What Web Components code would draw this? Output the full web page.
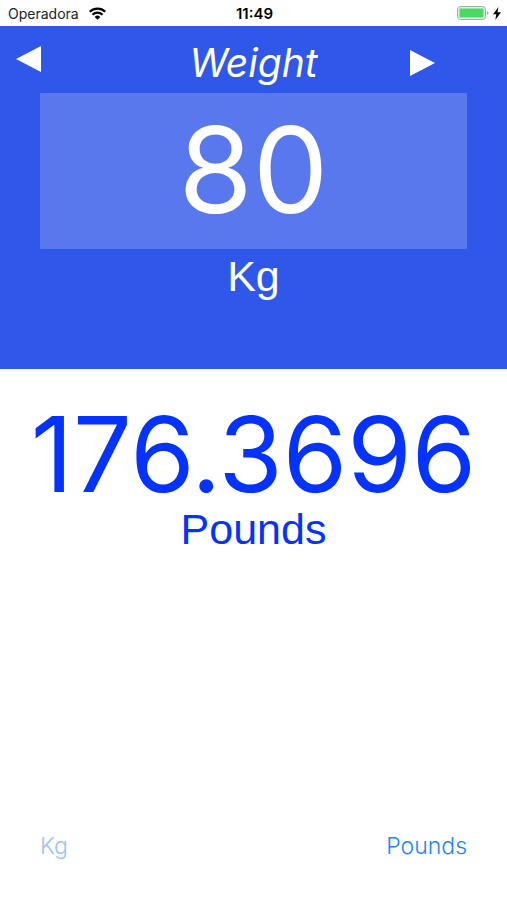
<!DOCTYPE html>
<html lang="en">
<head>
<meta charset="utf-8">
<meta name="viewport" content="width=device-width, initial-scale=1">
<title>Weight</title>
<style>
    html, body { height: 100%; }
    body {
        margin: 0;
        background: #fff;
        font-family: Inter, Roboto, sans-serif;
    }
</style>
</head>
<body>
<unit-converter></unit-converter>

<script>
/* Status bar: carrier, clock, battery */
(function(){

    const template = document.createElement('template');

    template.innerHTML = `
    <style>
    :host {
        display: grid;
        grid-template-columns: 1fr auto 1fr;
        align-items: center;
        height: 26px;
        padding: 0 6px 0 8px;
        box-sizing: border-box;
        background: #fff;
        color: #000;
        font-size: 15px;
    }
    .side {
        display: flex;
        align-items: center;
        gap: 6px;
    }
    .carrier {
        font-size: 14px;
        color: #222;
    }
    .left { gap: 10px; }
    .right {
        justify-content: flex-end;
        gap: 4px;
    }
    time { font-weight: 600; }
    svg { display: block; }
    </style>

    <div class="side left">
        <span class="carrier"><slot></slot></span>
        <svg width="17" height="13" viewBox="0 0 17 13" aria-hidden="true">
            <g fill="none" stroke="#000" stroke-width="2.200">
                <path d="M.8 4.800a11 11 0 0 1 15.400 0"/>
                <path d="M3.500 7.700a7.200 7.200 0 0 1 10 0"/>
            </g>
            <path d="M5.700 9.900a4.100 4.100 0 0 1 5.600 0L8.500 12.700z"/>
        </svg>
    </div>
    <time>11:49</time>
    <div class="side right">
        <svg width="32" height="14" viewBox="0 0 32 14" aria-hidden="true">
            <rect x=".5" y=".5" width="28" height="13" rx="3" fill="#e4ece4" stroke="#a6a6a6"/>
            <rect x="2.500" y="2.500" width="24" height="9" rx="1" fill="#4cd964"/>
            <path d="M30 5q1.500 .5 1.500 2t-1.500 2z" fill="#a6a6a6"/>
        </svg>
        <svg width="8" height="13" viewBox="0 0 8 13" aria-hidden="true">
            <path d="M5.500 0 0 7.300h3.300L2.300 13 8 5.300H4.500z"/>
        </svg>
    </div>`

    customElements.define('status-bar',
    class extends HTMLElement {
        constructor() {
            super()
            this.attachShadow({ mode: 'open' }).append(template.content.cloneNode(true));
        }
    });

}) ();

/* Arrow button, points left unless dir-to="right" */
(function(){

    const template = document.createElement('template');

    template.innerHTML = `
    <style>
    :host { display: block; }
    button {
        display: block;
        padding: 0;
        border: none;
        background: none;
        color: inherit;
        cursor: pointer;
    }
    svg { display: block; }
    :host([dir-to="right"]) svg { transform: scaleX(-1); }
    </style>

    <button type="button">
        <svg width="25" height="26" viewBox="0 0 25 26" fill="currentColor" aria-hidden="true">
            <path d="M0 13 25 0v26z"/>
        </svg>
    </button>`

    customElements.define('unit-arrow',
    class extends HTMLElement {
        constructor() {
            super()
            this.attachShadow({ mode: 'open' }).append(template.content.cloneNode(true));
        }

        connectedCallback() {
            const right = this.getAttribute('dir-to') === 'right';
            this.shadowRoot.querySelector('button').setAttribute('aria-label', right ? 'Next' : 'Previous');
        }
    });

}) ();

/* Text button of the bottom bar */
(function(){

    const template = document.createElement('template');

    template.innerHTML = `
    <style>
    :host { display: block; }
    button {
        display: block;
        padding: 0;
        border: none;
        background: none;
        color: #1a86fb;
        font: inherit;
        cursor: pointer;
    }
    :host([selected]) button { color: #99c4f9; }
    </style>

    <button type="button"><slot></slot></button>`

    customElements.define('unit-option',
    class extends HTMLElement {
        constructor() {
            super()
            this.attachShadow({ mode: 'open' }).append(template.content.cloneNode(true));
        }
    });

}) ();

/* Main converter screen */
(function(){

    const POUNDS_PER_KG = 2.20462;

    const template = document.createElement('template');

    template.innerHTML = `
    <style>
    :host {
        display: flex;
        flex-direction: column;
        min-height: 100%;
    }
    .panel {
        padding-bottom: 66px;
        background: #2f58ea;
        color: #fff;
    }
    header {
        display: grid;
        grid-template-columns: 1fr auto 1fr;
        align-items: start;
        padding: 8px 16px 0;
        height: 67px;
        box-sizing: border-box;
    }
    h1 {
        margin: 0;
        font-size: 39px;
        line-height: 58px;
        font-weight: 400;
        font-style: italic;
    }
    .prev { margin-top: 12px; }
    .next {
        justify-self: end;
        margin: 16px 56px 0 0;
    }
    input {
        display: block;
        box-sizing: border-box;
        width: calc(100% - 80px);
        height: 156px;
        margin: 0 40px;
        padding: 0 0 4px;
        border: none;
        background: #5978ee;
        color: inherit;
        font-family: inherit;
        font-size: 120px;
        text-align: center;
        outline: none;
    }
    .unit {
        display: block;
        font-family: "Liberation Sans", Arial, sans-serif;
        font-size: 43px;
        line-height: 54px;
        text-align: center;
    }
    .result {
        flex: 1;
        padding-top: 32px;
        color: #0433ff;
        text-align: center;
    }
    output {
        display: block;
        font-size: 104px;
        line-height: 106px;
    }
    .result .unit { line-height: 44px; }
    nav {
        display: flex;
        justify-content: space-between;
        padding: 0 40px 40px;
        font-size: 23px;
        font-weight: 300;
        line-height: 28px;
    }
    </style>

    <status-bar>Operadora</status-bar>
    <section class="panel">
        <header>
            <unit-arrow class="prev"></unit-arrow>
            <h1>Weight</h1>
            <unit-arrow class="next" dir-to="right"></unit-arrow>
        </header>
        <input id="amount" type="text" inputmode="decimal" value="80">
        <label class="unit" for="amount">Kg</label>
    </section>
    <section class="result">
        <output for="amount">176.3696</output>
        <span class="unit">Pounds</span>
    </section>
    <nav>
        <unit-option selected>Kg</unit-option>
        <unit-option>Pounds</unit-option>
    </nav>`

    customElements.define('unit-converter',
    class extends HTMLElement {
        constructor() {
            super()
            this.attachShadow({ mode: 'open' }).append(template.content.cloneNode(true));

            const $amount = this.shadowRoot.querySelector('#amount');
            const $output = this.shadowRoot.querySelector('output');

            $amount.addEventListener('input', () => {
                $output.value = +((parseFloat($amount.value) || 0) * POUNDS_PER_KG).toFixed(4);
            });
        }
    });

}) ();
</script>
</body>
</html>
